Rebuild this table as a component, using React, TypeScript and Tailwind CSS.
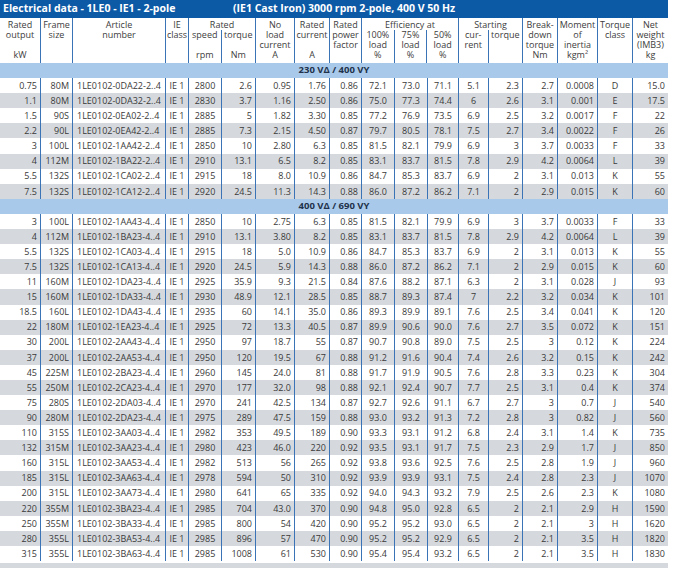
import React from "react";

const COLS = [
  "w-[41px]", "w-[32px]", "w-[93px]", "w-[23px]", "w-[33px]", "w-[34px]",
  "w-[39px]", "w-[35px]", "w-[32px]", "w-[33px]", "w-[33px]", "w-[31px]",
  "w-[30px]", "w-[34px]", "w-[35px]", "w-[40px]", "w-[35px]", "w-[35px]",
];
const R = "justify-end pr-[3px]";
const L = "justify-start pl-[4px]";
const C = "justify-center";
const ALIGN = [R, R, L, C, C, R, R, R, R, C, C, C, C, R, R, R, C, R];

const LINE = "border-[#3b74b6]";

const S1: string[][] = [
  ["0.75", "80M", "1LE0102-0DA22-2..4", "IE 1", "2800", "2.6", "0.95", "1.76", "0.86", "72.1", "73.0", "71.1", "5.1", "2.3", "2.7", "0.0008", "D", "15.0"],
  ["1.1", "80M", "1LE0102-0DA32-2..4", "IE 1", "2830", "3.7", "1.16", "2.50", "0.86", "75.0", "77.3", "74.4", "6", "2.6", "3.1", "0.001", "E", "17.5"],
  ["1.5", "90S", "1LE0102-0EA02-2..4", "IE 1", "2885", "5", "1.82", "3.30", "0.85", "77.2", "76.9", "73.5", "6.9", "2.5", "3.2", "0.0017", "F", "22"],
  ["2.2", "90L", "1LE0102-0EA42-2..4", "IE 1", "2885", "7.3", "2.15", "4.50", "0.87", "79.7", "80.5", "78.1", "7.5", "2.7", "3.4", "0.0022", "F", "26"],
  ["3", "100L", "1LE0102-1AA42-2..4", "IE 1", "2850", "10", "2.80", "6.3", "0.85", "81.5", "82.1", "79.9", "6.9", "3", "3.7", "0.0033", "F", "33"],
  ["4", "112M", "1LE0102-1BA22-2..4", "IE 1", "2910", "13.1", "6.5", "8.2", "0.85", "83.1", "83.7", "81.5", "7.8", "2.9", "4.2", "0.0064", "L", "39"],
  ["5.5", "132S", "1LE0102-1CA02-2..4", "IE 1", "2915", "18", "8.0", "10.9", "0.86", "84.7", "85.3", "83.7", "6.9", "2", "3.1", "0.013", "K", "55"],
  ["7.5", "132S", "1LE0102-1CA12-2..4", "IE 1", "2920", "24.5", "11.3", "14.3", "0.88", "86.0", "87.2", "86.2", "7.1", "2", "2.9", "0.015", "K", "60"],
];

const S2: string[][] = [
  ["3", "100L", "1LE0102-1AA43-4..4", "IE 1", "2850", "10", "2.75", "6.3", "0.85", "81.5", "82.1", "79.9", "6.9", "3", "3.7", "0.0033", "F", "33"],
  ["4", "112M", "1LE0102-1BA23-4..4", "IE 1", "2910", "13.1", "3.80", "8.2", "0.85", "83.1", "83.7", "81.5", "7.8", "2.9", "4.2", "0.0064", "L", "39"],
  ["5.5", "132S", "1LE0102-1CA03-4..4", "IE 1", "2915", "18", "5.0", "10.9", "0.86", "84.7", "85.3", "83.7", "6.9", "2", "3.1", "0.013", "K", "55"],
  ["7.5", "132S", "1LE0102-1CA13-4..4", "IE 1", "2920", "24.5", "5.9", "14.3", "0.88", "86.0", "87.2", "86.2", "7.1", "2", "2.9", "0.015", "K", "60"],
  ["11", "160M", "1LE0102-1DA23-4..4", "IE 1", "2925", "35.9", "9.3", "21.5", "0.84", "87.6", "88.2", "87.1", "6.3", "2", "3.1", "0.028", "J", "93"],
  ["15", "160M", "1LE0102-1DA33-4..4", "IE 1", "2930", "48.9", "12.1", "28.5", "0.85", "88.7", "89.3", "87.4", "7", "2.2", "3.2", "0.034", "K", "101"],
  ["18.5", "160L", "1LE0102-1DA43-4..4", "IE 1", "2935", "60", "14.1", "35.0", "0.86", "89.3", "89.9", "89.1", "7.6", "2.5", "3.4", "0.041", "K", "120"],
  ["22", "180M", "1LE0102-1EA23-4..4", "IE 1", "2925", "72", "13.3", "40.5", "0.87", "89.9", "90.6", "90.0", "7.6", "2.7", "3.5", "0.072", "K", "151"],
  ["30", "200L", "1LE0102-2AA43-4..4", "IE 1", "2950", "97", "18.7", "55", "0.87", "90.7", "90.8", "89.0", "7.5", "2.5", "3", "0.12", "K", "224"],
  ["37", "200L", "1LE0102-2AA53-4..4", "IE 1", "2950", "120", "19.5", "67", "0.88", "91.2", "91.6", "90.4", "7.4", "2.6", "3.2", "0.15", "K", "242"],
  ["45", "225M", "1LE0102-2BA23-4..4", "IE 1", "2960", "145", "24.0", "81", "0.88", "91.7", "91.9", "90.5", "7.6", "2.8", "3.3", "0.23", "K", "304"],
  ["55", "250M", "1LE0102-2CA23-4..4", "IE 1", "2970", "177", "32.0", "98", "0.88", "92.1", "92.4", "90.7", "7.7", "2.5", "3.1", "0.4", "K", "374"],
  ["75", "280S", "1LE0102-2DA03-4..4", "IE 1", "2970", "241", "42.5", "134", "0.87", "92.7", "92.6", "91.1", "6.7", "2.7", "3", "0.7", "J", "540"],
  ["90", "280M", "1LE0102-2DA23-4..4", "IE 1", "2975", "289", "47.5", "159", "0.88", "93.0", "93.2", "91.3", "7.2", "2.8", "3", "0.82", "J", "560"],
  ["110", "315S", "1LE0102-3AA03-4..4", "IE 1", "2982", "353", "49.5", "189", "0.90", "93.3", "93.1", "91.2", "6.8", "2.4", "3.1", "1.4", "K", "735"],
  ["132", "315M", "1LE0102-3AA23-4..4", "IE 1", "2980", "423", "46.0", "220", "0.92", "93.5", "93.1", "91.7", "7.5", "2.3", "2.9", "1.7", "J", "850"],
  ["160", "315L", "1LE0102-3AA53-4..4", "IE 1", "2982", "513", "56", "265", "0.92", "93.8", "93.6", "92.5", "7.6", "2.5", "2.8", "1.9", "J", "960"],
  ["185", "315L", "1LE0102-3AA63-4..4", "IE 1", "2978", "594", "50", "310", "0.92", "93.9", "93.9", "93.1", "7.5", "2.4", "2.8", "2.3", "J", "1070"],
  ["200", "315L", "1LE0102-3AA73-4..4", "IE 1", "2980", "641", "65", "335", "0.92", "94.0", "94.3", "93.2", "7.9", "2.5", "2.6", "2.3", "K", "1080"],
  ["220", "355M", "1LE0102-3BA23-4..4", "IE 1", "2985", "704", "43.0", "370", "0.90", "94.8", "95.0", "92.8", "6.5", "2", "2.1", "2.9", "H", "1590"],
  ["250", "355M", "1LE0102-3BA33-4..4", "IE 1", "2985", "800", "54", "420", "0.90", "95.2", "95.2", "93.0", "6.5", "2", "2.1", "3", "H", "1620"],
  ["280", "355L", "1LE0102-3BA53-4..4", "IE 1", "2985", "896", "57", "470", "0.90", "95.2", "95.2", "92.9", "6.5", "2", "2.1", "3.5", "H", "1820"],
  ["315", "355L", "1LE0102-3BA63-4..4", "IE 1", "2985", "1008", "61", "530", "0.90", "95.4", "95.4", "93.2", "6.5", "2", "2.1", "3.5", "H", "1830"],
];

function Row({ cells, gray }: { cells: string[]; gray: boolean }) {
  return (
    <div className={`flex h-[15.1px] ${gray ? "bg-[#d5d9de]" : "bg-white"}`}>
      {cells.map((c, i) => (
        <div
          key={i}
          className={`${COLS[i]} ${ALIGN[i]} flex h-full items-center whitespace-nowrap ${i < 17 ? `border-r ${LINE}` : ""}`}
        >
          {c}
        </div>
      ))}
    </div>
  );
}

function Band({ label }: { label: string }) {
  return (
    <div className="flex h-[15.1px] items-center justify-center bg-[#a8c9ea] text-[9.5px] font-bold text-[#22324a]">
      {label}
    </div>
  );
}

function HCell({ w, lines, last, sub }: { w: string; lines: string[]; last?: boolean; sub?: boolean }) {
  return (
    <div className={`${w} flex flex-col items-center ${sub ? "" : "pt-[2px]"} ${last ? "" : `border-r ${LINE}`}`}>
      {lines.map((l, i) => (
        <div key={i} className="h-[10px] whitespace-nowrap leading-[10px]">
          {l}
        </div>
      ))}
    </div>
  );
}

function Group({ w, title, children }: { w: string; title: string; children: React.ReactNode }) {
  return (
    <div className={`${w} flex flex-col border-r ${LINE}`}>
      <div className="h-[12px] whitespace-nowrap pt-[2px] text-center leading-[10px]">{title}</div>
      <div className="flex flex-1">{children}</div>
    </div>
  );
}

export default function App() {
  return (
    <div className="w-[675px] h-[570px] overflow-hidden bg-white font-['Open_Sans','Liberation_Sans',sans-serif] text-[9px] text-[#3a3a3a]">
      <div className="w-[668px]">
        <div className="flex h-[18px] items-center bg-[#0c5aa6] text-[10.5px] font-bold text-white">
          <span className="w-[233px] whitespace-nowrap pl-[3px]">Electrical data - 1LE0 - IE1 - 2-pole</span>
          <span className="whitespace-nowrap">(IE1 Cast Iron) 3000 rpm 2-pole, 400 V 50 Hz</span>
        </div>
        <div className="flex h-[45px] bg-white text-[#3d3d3d]">
          <HCell w="w-[41px]" lines={["Rated", "output", "", "kW"]} />
          <HCell w="w-[32px]" lines={["Frame", "size", "", ""]} />
          <HCell w="w-[93px]" lines={["Article", "number", "", ""]} />
          <HCell w="w-[23px]" lines={["IE", "class", "", ""]} />
          <Group w="w-[67px]" title="Rated">
            <HCell sub w="w-[33px]" lines={["speed", "", "rpm"]} />
            <HCell sub last w="w-[34px]" lines={["torque", "", "Nm"]} />
          </Group>
          <HCell w="w-[39px]" lines={["No", "load", "current", "A"]} />
          <HCell w="w-[35px]" lines={["Rated", "current", "", "A"]} />
          <HCell w="w-[32px]" lines={["Rated", "power", "factor", ""]} />
          <Group w="w-[97px]" title="Efficiency at">
            <HCell sub w="w-[33px]" lines={["100%", "load", "%"]} />
            <HCell sub w="w-[33px]" lines={["75%", "load", "%"]} />
            <HCell sub last w="w-[31px]" lines={["50%", "load", "%"]} />
          </Group>
          <Group w="w-[64px]" title="Starting">
            <HCell sub w="w-[30px]" lines={["cur-", "rent", ""]} />
            <HCell sub last w="w-[34px]" lines={["torque", "", ""]} />
          </Group>
          <HCell w="w-[35px]" lines={["Break-", "down", "torque", "Nm"]} />
          <HCell w="w-[40px]" lines={["Moment", "of", "inertia", "kgm²"]} />
          <HCell w="w-[35px]" lines={["Torque", "class", "", ""]} />
          <HCell last w="w-[35px]" lines={["Net", "weight", "(IMB3)", "kg"]} />
        </div>
        <Band label="230 VΔ / 400 VY" />
        {S1.map((r, i) => (
          <Row key={`a${i}`} cells={r} gray={i % 2 === 1} />
        ))}
        <Band label="400 VΔ / 690 VY" />
        {S2.map((r, i) => (
          <Row key={`b${i}`} cells={r} gray={i % 2 === 1} />
        ))}
        <div className="mt-[2px] h-[5px] bg-[#d5d9de]" />
      </div>
    </div>
  );
}
